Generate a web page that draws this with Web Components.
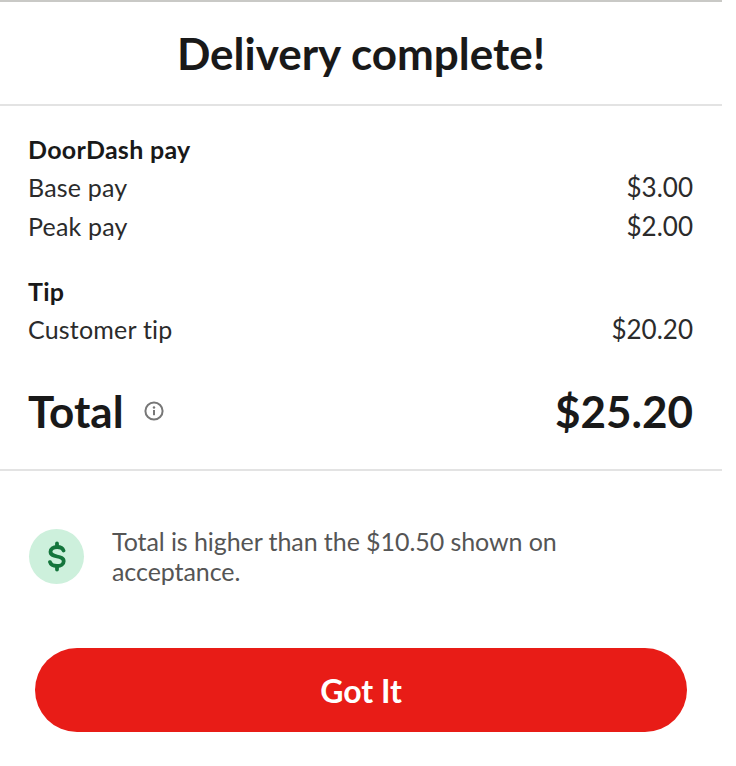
<!DOCTYPE html>
<html>
<head>
<meta charset="utf-8">
<style>
  html, body { margin: 0; background: #fff; }
  body { font-family: Lato, "Liberation Sans", sans-serif; color: #191919; width: 736px; height: 766px; overflow: hidden; }
</style>
</head>
<body>
<pay-summary>
  <pay-section heading="DoorDash pay">
    <pay-row label="Base pay" amount="$3.00"></pay-row>
    <pay-row label="Peak pay" amount="$2.00"></pay-row>
  </pay-section>
  <pay-section heading="Tip" style="--section-top: 29px">
    <pay-row label="Customer tip" amount="$20.20"></pay-row>
  </pay-section>
  <pay-total amount="$25.20"></pay-total>
  <pay-note slot="note">Total is higher than the $10.50 shown on acceptance.</pay-note>
  <got-it-button slot="cta">Got It</got-it-button>
</pay-summary>

<script>
// one row of the breakdown
class PayRow extends HTMLElement {
    connectedCallback() {
        this.attachShadow({ mode: 'open' });
        this.shadowRoot.innerHTML = `
            <style>
                :host { display: flex; justify-content: space-between; height: 39px; align-items: center; font-size: 25px; letter-spacing: 0.2px; color: #2b2b2b; }
                .num { font-size: 26px; letter-spacing: 0; }
            </style>
            <span>${this.getAttribute('label')}</span>
            <span class="num">${this.getAttribute('amount')}</span>
        `;
    }
}

class PaySection extends HTMLElement {
    connectedCallback() {
        this.attachShadow({ mode: 'open' });
        this.shadowRoot.innerHTML = `
            <style>
                :host { display: block; padding-top: var(--section-top, 0); }
                h2 { margin: 0; height: 35px; line-height: 35px; font-size: 25px; letter-spacing: 0.3px; font-weight: 700; color: #191919; }
            </style>
            <h2>${this.getAttribute('heading')}</h2>
            <slot></slot>
        `;
    }
}

class PayTotal extends HTMLElement {
    connectedCallback() {
        this.attachShadow({ mode: 'open' });
        this.shadowRoot.innerHTML = `
            <style>
                :host { display: flex; justify-content: space-between; align-items: center; height: 50px; margin-top: 38px; font-size: 44px; font-weight: 700; color: #191919; }
                .left { display: flex; align-items: center; gap: 20px; }
                svg { display: block; width: 20px; height: 20px; }
            </style>
            <span class="left">Total
                <svg viewBox="0 0 20 20" fill="none">
                    <circle cx="10" cy="10" r="8.6" stroke="#777" stroke-width="2"/>
                    <rect x="9" y="9" width="2" height="5.2" fill="#777"/>
                    <circle cx="10" cy="6.5" r="1.2" fill="#777"/>
                </svg>
            </span>
            <span>${this.getAttribute('amount')}</span>
        `;
    }
}

class PayNote extends HTMLElement {
    connectedCallback() {
        this.attachShadow({ mode: 'open' });
        this.shadowRoot.innerHTML = `
            <style>
                :host { display: flex; align-items: center; gap: 28px; font-size: 25px; letter-spacing: -0.07px; line-height: 30px; color: #555; }
                .badge { flex: none; width: 55px; height: 55px; border-radius: 50%; background: #cdf0dc; display: flex; align-items: center; justify-content: center; }
                svg { display: block; width: 18px; height: 31px; }
                p { margin: 0; width: 480px; }
            </style>
            <span class="badge">
                <svg viewBox="0 0 18 31" fill="none" stroke="#14753c" stroke-width="3.8" stroke-linecap="round">
                    <path d="M15.500 9.500C14.700 7.200 12.500 6 9.200 6 5.200 6 2.500 7.800 2.500 10.800c0 6.600 13.200 2.800 13.200 9.400 0 2.900-2.800 4.800-6.700 4.800-3.700 0-6.300-1.400-7-3.900"/>
                    <path d="M9 2.500v3M9 25.500v3"/>
                </svg>
            </span>
            <p><slot></slot></p>
        `;
    }
}

class GotItButton extends HTMLElement {
    connectedCallback() {
        this.attachShadow({ mode: 'open' });
        this.shadowRoot.innerHTML = `
            <style>
                :host { display: flex; align-items: center; justify-content: center; width: 652px; height: 84px; border-radius: 42px; background: #e81c17; color: #fff; font-size: 32px; font-weight: 700; }
            </style>
            <slot></slot>
        `;
    }
}

class PaySummary extends HTMLElement {
    connectedCallback() {
        this.attachShadow({ mode: 'open' });
        this.shadowRoot.innerHTML = `
            <style>
                :host { display: block; width: 722px; }
                .top { height: 2px; background: #c9c9c6; }
                header { height: 102px; display: flex; align-items: center; justify-content: center; font-size: 44px; font-weight: 700; color: #191919; border-bottom: 2px solid #e3e3e3; }
                .body { padding: 26px 29px 33px 28px; border-bottom: 2px solid #e3e3e3; }
                .foot { padding: 55px 0 0 29px; }
                .cta { padding: 62px 0 0 35px; }
            </style>
            <div class="top"></div>
            <header>Delivery complete!</header>
            <div class="body"><slot></slot></div>
            <div class="foot"><slot name="note"></slot></div>
            <div class="cta"><slot name="cta"></slot></div>
        `;
    }
}

customElements.define('pay-row', PayRow);
customElements.define('pay-section', PaySection);
customElements.define('pay-total', PayTotal);
customElements.define('pay-note', PayNote);
customElements.define('got-it-button', GotItButton);
customElements.define('pay-summary', PaySummary);
</script>
</body>
</html>
